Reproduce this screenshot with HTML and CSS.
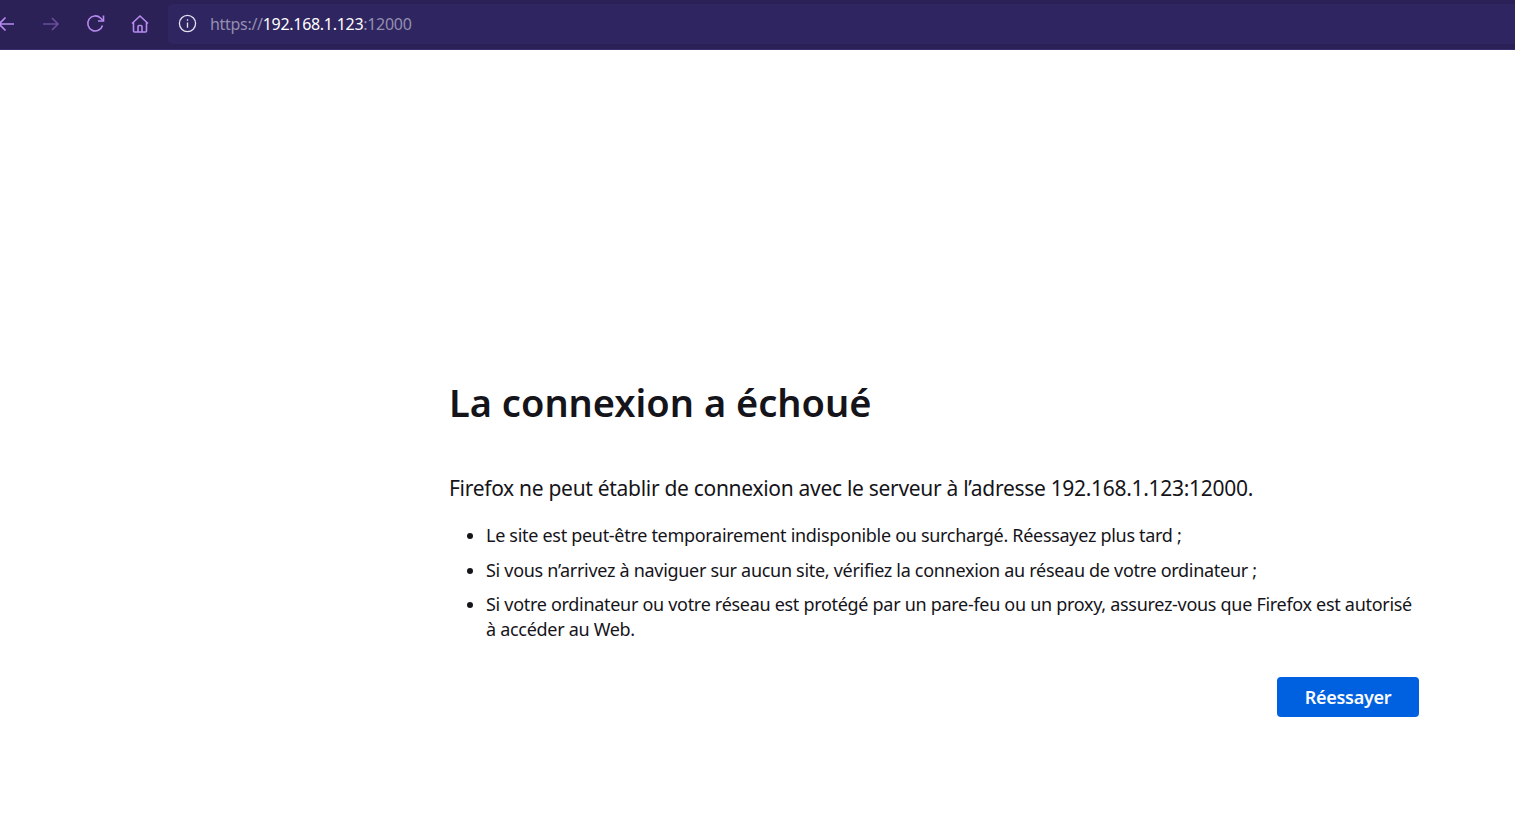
FILE: index.html
```html
<!DOCTYPE html>
<html lang="fr">
<head>
    <meta charset="UTF-8">
    <title>Échec de la connexion</title>
    <link rel="stylesheet" href="styles.css">
</head>
<body>
    <!-- Barre de navigation -->
    <div class="toolbar">
        <div class="nav-buttons">
            <svg class="nav-icon icon-back" viewBox="0 0 18 18"><path d="M16 9H1M7.500 2.500 1 9l6.500 6.500"/></svg>
            <svg class="nav-icon icon-forward" viewBox="0 0 18 18"><path d="M1 9h15M10 3l6 6-6 6"/></svg>
            <svg class="nav-icon icon-reload" viewBox="0 0 20 20"><path d="M16.500 11.500A7.500 7.500 0 1 1 14.500 4L17 6.500"/><path d="M17.500 1.500V7H12"/></svg>
            <svg class="nav-icon icon-home" viewBox="0 0 20 20"><path d="M2 9.500 10 2l8 7.500M3.500 8.500V17a1 1 0 0 0 1 1h11a1 1 0 0 0 1-1V8.500"/><path d="M8 18v-5.500a1 1 0 0 1 1-1h2a1 1 0 0 1 1 1V18"/></svg>
        </div>
        <div class="url-bar">
            <svg class="info-icon" viewBox="0 0 20 20"><circle cx="10" cy="10" r="8.500"/><path d="M10 9v5.500M10 5.500v1.500"/></svg>
            <span class="url"><span class="url-dim">https://</span>192.168.1.123<span class="url-dim">:12000</span></span>
        </div>
    </div>

    <!-- Contenu de la page d'erreur -->
    <div class="error-page">
        <div class="error-container">
            <h1 class="error-title">La connexion a échoué</h1>
            <p class="error-intro">Firefox ne peut établir de connexion avec le serveur à l’adresse 192.168.1.123:12000.</p>
            <ul class="error-list">
                <li>Le site est peut-être temporairement indisponible ou surchargé. Réessayez plus tard ;</li>
                <li>Si vous n’arrivez à naviguer sur aucun site, vérifiez la connexion au réseau de votre ordinateur ;</li>
                <li>Si votre ordinateur ou votre réseau est protégé par un pare-feu ou un proxy, assurez-vous que Firefox est autorisé à accéder au Web.</li>
            </ul>
            <div class="button-row">
                <button class="retry-button">Réessayer</button>
            </div>
        </div>
    </div>
</body>
</html>
```
FILE: styles.css
```css
* {
    margin: 0;
    padding: 0;
    box-sizing: border-box;
}

body, html {
    width: 100%;
    height: 100%;
    overflow: hidden;
    background: #ffffff;
    font-family: "Noto Sans", "Open Sans", "Liberation Sans", sans-serif;
}

.toolbar {
    height: 50px;
    background: #2b2156;
    border-bottom: 1px solid #3a2d6b;
    display: flex;
    padding-top: 4px;
}

.nav-buttons {
    width: 170px;
    height: 40px;
    flex-shrink: 0;
    display: flex;
    align-items: center;
    margin-left: -2px;
}

.nav-icon {
    fill: none;
    stroke-width: 1.6;
    stroke: #b78af0;
}

.icon-back {
    width: 18px;
    height: 18px;
    margin-right: 26px;
    margin-top: -1px;
}

.icon-forward {
    width: 18px;
    height: 18px;
    margin-right: 26px;
    stroke: #6a4c9c;
    margin-top: -1px;
}

.icon-reload {
    width: 20px;
    height: 20px;
    margin-right: 24px;
    margin-top: -1px;
}

.icon-home {
    width: 20px;
    height: 20px;
}

.url-bar {
    flex: 1;
    height: 40px;
    background: #2f2560;
    border-radius: 4px 0 0 4px;
    display: flex;
    align-items: center;
    padding-left: 10px;
    font-size: 16px;
    color: #ffffff;
}

.info-icon {
    width: 19px;
    height: 19px;
    fill: none;
    stroke: #e4e0f0;
    stroke-width: 1.4;
    margin-right: 13px;
    margin-top: -2px;
}

.url {
    letter-spacing: -0.3px;
}

.url-dim {
    color: #948fb0;
}

.error-page {
    padding: 328px 96px 0 449px;
    color: #15141a;
}

.error-title {
    font-size: 38px;
    font-weight: 600;
    line-height: 48px;
    margin-bottom: 47px;
}

.error-intro {
    font-size: 21px;
    line-height: 30px;
    margin-bottom: 20px;
    letter-spacing: -0.3px;
}

.error-list {
    padding-left: 37px;
    font-size: 18px;
    line-height: 25px;
    letter-spacing: -0.3px;
}

.error-list li {
    margin-bottom: 9.500px;
}

.button-row {
    display: flex;
    justify-content: flex-end;
    margin-top: 35px;
}

.retry-button {
    width: 142px;
    height: 40px;
    border: none;
    border-radius: 4px;
    background: #0061e0;
    color: #fbfbfe;
    font-family: inherit;
    font-size: 18px;
    font-weight: 600;
    letter-spacing: -0.3px;
}
```
